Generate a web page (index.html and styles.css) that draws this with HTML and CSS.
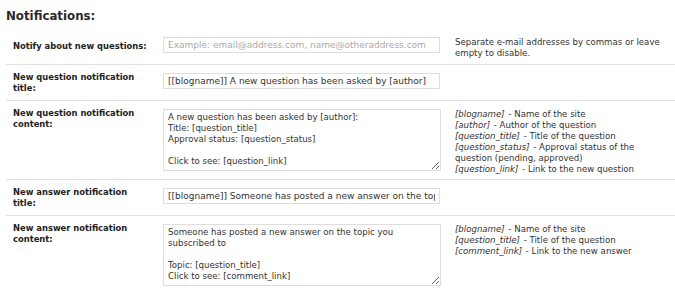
FILE: index.html
```html
<!DOCTYPE html>
<html lang="en">

<head>
  <meta charset="UTF-8">
  <title>Notifications</title>
  <link rel="stylesheet" href="styles.css">
</head>

<body>
  <h3 class="title">Notifications:</h3>
  <table class="form-table">
    <tr class="first">
      <th>Notify about new questions:</th>
      <td class="field"><input type="text" class="text" placeholder="Example: email@address.com, name@otheraddress.com"></td>
      <td class="desc">Separate e-mail addresses by commas or leave empty to disable.</td>
    </tr>
    <tr>
      <th>New question notification title:</th>
      <td class="field"><input type="text" class="text" value="[[blogname]] A new question has been asked by [author]"></td>
      <td class="desc"></td>
    </tr>
    <tr>
      <th>New question notification content:</th>
      <td class="field"><textarea class="area">A new question has been asked by [author]:
Title: [question_title]
Approval status: [question_status]

Click to see: [question_link]</textarea></td>
      <td class="desc">
        <i>[blogname]</i> - Name of the site<br>
        <i>[author]</i> - Author of the question<br>
        <i>[question_title]</i> - Title of the question<br>
        <i>[question_status]</i> - Approval status of the question (pending, approved)<br>
        <i>[question_link]</i> - Link to the new question
      </td>
    </tr>
    <tr>
      <th>New answer notification title:</th>
      <td class="field"><input type="text" class="text" value="[[blogname]] Someone has posted a new answer on the topic you subscribed to"></td>
      <td class="desc"></td>
    </tr>
    <tr>
      <th>New answer notification content:</th>
      <td class="field"><textarea class="area">Someone has posted a new answer on the topic you subscribed to

Topic: [question_title]
Click to see: [comment_link]</textarea></td>
      <td class="desc">
        <i>[blogname]</i> - Name of the site<br>
        <i>[question_title]</i> - Title of the question<br>
        <i>[comment_link]</i> - Link to the new answer
      </td>
    </tr>
  </table>
</body>

</html>
```

FILE: styles.css
```css
* {
  padding: 0;
  margin: 0;
  box-sizing: border-box;
}

body {
  background-color: #fff;
  color: #333;
  font-family: "DejaVu Sans", Verdana, sans-serif;
  font-size: 9px;
  padding: 8px 0 0 6px;
  overflow: hidden;
}

.title {
  font-size: 11.8px;
  font-weight: bold;
  color: #2a2a2a;
  line-height: 16px;
  margin-bottom: 5px;
}

.form-table {
  border-collapse: collapse;
  width: 669px;
}

.form-table tr {
  border-top: 1px solid #e1e1e1;
}

.form-table tr.first {
  border-top: none;
}

.form-table th {
  width: 157px;
  text-align: left;
  vertical-align: top;
  font-family: "DejaVu Sans Condensed", "DejaVu Sans", sans-serif;
  font-size: 9.3px;
  font-weight: bold;
  color: #222;
  padding: 6px 12px 4px 7px;
  line-height: 11px;
}

.form-table tr.first th {
  padding-top: 11px;
}

.form-table td {
  vertical-align: top;
  padding: 8px 0;
}

.field {
  width: 292px;
}

.text {
  display: block;
  width: 277px;
  height: 16px;
  margin-bottom: 3px;
  border: 1px solid #dedede;
  padding: 0 4px;
  font: 9px "DejaVu Sans", Verdana, sans-serif;
  color: #333;
}

.text::placeholder {
  color: #aaa;
}

.area {
  display: block;
  width: 278px;
  height: 62px;
  border: 1px solid #dedede;
  padding: 2px 4px;
  font: 8.6px/11px "DejaVu Sans", Verdana, sans-serif;
  color: #333;
  resize: vertical;
}

.form-table td.desc {
  font-size: 8.6px;
  line-height: 11px;
  color: #333;
  padding: 8px 10px 0 0;
}

.desc i {
  padding-right: 1px;
}
```
